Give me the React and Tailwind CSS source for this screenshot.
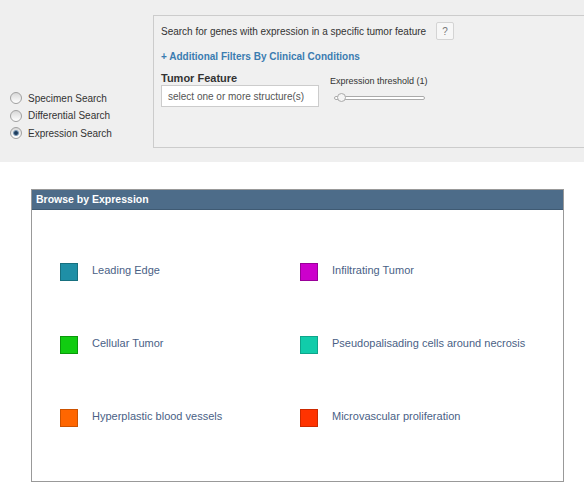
import React from 'react';

const items = [
  { label: 'Leading Edge', color: 'bg-[#1f8fa6]', border: 'border-[#17707f]' },
  { label: 'Infiltrating Tumor', color: 'bg-[#cc00cc]', border: 'border-[#990099]' },
  { label: 'Cellular Tumor', color: 'bg-[#11cc11]', border: 'border-[#0a990a]' },
  { label: 'Pseudopalisading cells around necrosis', color: 'bg-[#11ccaa]', border: 'border-[#0ea58a]' },
  { label: 'Hyperplastic blood vessels', color: 'bg-[#ff6600]', border: 'border-[#cc5200]' },
  { label: 'Microvascular proliferation', color: 'bg-[#ff3300]', border: 'border-[#cc2900]' },
];

const Radio = ({ label, checked }) => (
  <label className="flex items-center h-[17.5px]">
    <span className="w-[12px] h-[12px] rounded-full border border-[#a0a0a0] bg-gradient-to-b from-[#d8d8d8] to-[#ffffff] flex items-center justify-center">
      {checked && <span className="w-[6px] h-[6px] rounded-full bg-[#1d3c5c] border border-[#7a9ab8]" />}
    </span>
    <span className="ml-[6px] text-[10px] text-[#333]">{label}</span>
  </label>
);

export default function App() {
  return (
    <div className="w-[584px] min-h-[500px] bg-white font-['Liberation_Sans',Arial,sans-serif]">
      {/* search area */}
      <div className="bg-[#efefef] pt-[15px] pb-[14px] flex">
        <div className="w-[153px] pl-[10px] flex flex-col justify-end pb-[6px]">
          <Radio label="Specimen Search" />
          <Radio label="Differential Search" />
          <Radio label="Expression Search" checked />
        </div>
        <div className="flex-1 h-[133px] border border-r-0 border-[#cccccc] bg-[#f0f0f0] pl-[7px] pt-[6px]">
          <div className="flex items-center">
            <span className="text-[10px] text-[#333]">Search for genes with expression in a specific tumor feature</span>
            <span className="ml-[10px] w-[18px] h-[18px] border border-[#d4d4d4] bg-[#f7f7f7] rounded-[2px] flex items-center justify-center text-[10px] text-[#777]">?</span>
          </div>
          <div className="mt-[10px] text-[10px] font-bold text-[#3b7cb0] leading-[14px]">+ Additional Filters By Clinical Conditions</div>
          <div className="flex mt-[7px]">
            <div className="w-[158px]">
              <div className="text-[11px] font-bold text-[#333] leading-[14px]">Tumor Feature</div>
              <div className="h-[22px] bg-white border border-[#cccccc] flex items-center pl-[6px] text-[10px] text-[#555]">select one or more structure(s)</div>
            </div>
            <div className="ml-[11px] pt-[4px]">
              <div className="text-[9px] text-[#333] leading-[12px]">Expression threshold (1)</div>
              <div className="relative mt-[9px] ml-[4px] w-[91px] h-[4px] rounded-full border border-[#aaaaaa] bg-white">
                <span className="absolute left-[2px] top-[-4px] w-[9px] h-[9px] rounded-full border border-[#aaaaaa] bg-[#f4f4f4]" />
              </div>
            </div>
          </div>
        </div>
      </div>

      {/* browse panel */}
      <div className="mt-[27px] ml-[31px] w-[533px] h-[293px] border border-[#999999]">
        <div className="h-[20px] bg-[#4d6c89] border-b border-[#3f5a73] pl-[4px] flex items-center text-[10.5px] font-bold text-white">Browse by Expression</div>
        <div className="grid grid-cols-[240px_1fr] pl-[28px] pt-[53px] gap-y-[55px]">
          {items.map((it) => (
            <div key={it.label} className="flex items-start">
              <span className={`w-[18px] h-[18px] border ${it.color} ${it.border}`} />
              <span className="ml-[14px] text-[11px] leading-[14px] text-[#4a5f86]">{it.label}</span>
            </div>
          ))}
        </div>
      </div>
    </div>
  );
}
